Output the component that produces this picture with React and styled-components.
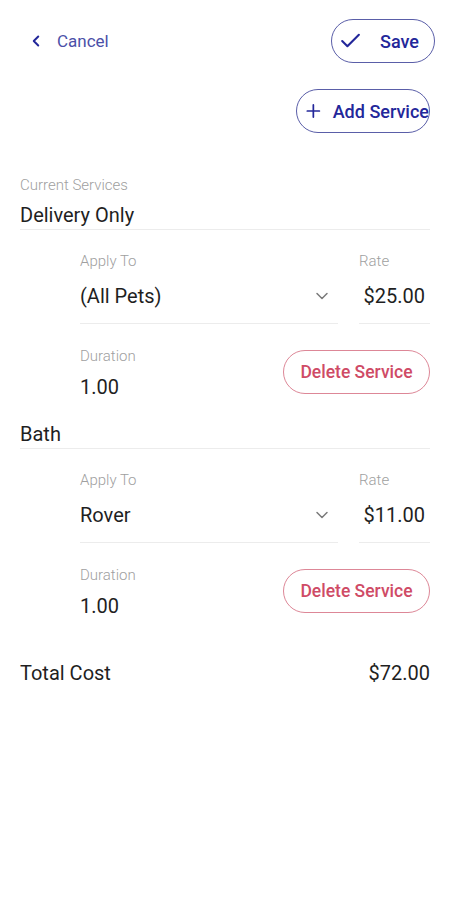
import styled, { createGlobalStyle } from 'styled-components'
import { Check, Plus, ChevronLeft, ChevronDown } from 'lucide-react'

const GlobalStyle = createGlobalStyle`
  body {
    margin: 0;
    background: #ffffff;
    font-family: Roboto, "Noto Sans", "Liberation Sans", sans-serif;
  }
`

const colors = {
  navy: '#23279a',
  navySoft: '#4b50a8',
  red: '#cf4b66',
  redBorder: '#dd8797',
  text: '#1f1f1f',
  label: '#a0a0a0',
  line: '#ececec',
}

const Page = styled.div`
  width: 450px;
  min-height: 900px;
  padding: 19px 20px 0;
  box-sizing: border-box;
`

const TopBar = styled.div`
  display: flex;
  justify-content: space-between;
  align-items: center;
  margin-right: -5px;
`

const CancelLink = styled.button`
  display: inline-flex;
  align-items: center;
  gap: 12px;
  padding: 0 0 0 7px;
  border: 0;
  background: none;
  color: ${colors.navySoft};
  font-family: inherit;
  font-size: 17px;

  svg {
    color: ${colors.navy};
  }
`

const PillButton = styled.button`
  display: inline-flex;
  align-items: center;
  box-sizing: border-box;
  height: 44px;
  border-radius: 22px;
  border: 1.5px solid ${(p) => (p.$danger ? colors.redBorder : '#5a5ea8')};
  background: #ffffff;
  color: ${(p) => (p.$danger ? colors.red : colors.navy)};
  font-family: inherit;
  font-size: 18px;
  font-weight: 500;
  white-space: nowrap;
`

const SaveButton = styled(PillButton)`
  width: 104px;
  padding: 0 15px 0 6px;
  gap: 17px;
`

const AddRow = styled.div`
  display: flex;
  justify-content: flex-end;
  margin-top: 26px;
`

const AddButton = styled(PillButton)`
  width: 134px;
  padding: 0 0 0 6px;
  gap: 9px;
  overflow: hidden;
`

const SectionLabel = styled.div`
  margin-top: 44px;
  font-size: 15px;
  font-weight: 300;
  line-height: 16px;
  color: ${colors.label};
`

const ServiceName = styled.div`
  margin-top: ${(p) => p.$top}px;
  padding-bottom: 3px;
  border-bottom: 1px solid ${colors.line};
  font-size: 20px;
  line-height: 22px;
  color: ${colors.text};
`

const Details = styled.div`
  padding-left: 60px;
  margin-top: 23px;
`

const FieldRow = styled.div`
  display: grid;
  grid-template-columns: 1fr 71px;
  gap: 21px;
`

const FieldLabel = styled.div`
  font-size: 15px;
  font-weight: 300;
  line-height: 16px;
  color: ${colors.label};
`

const FieldValue = styled.div`
  display: flex;
  align-items: center;
  justify-content: space-between;
  height: 54px;
  border-bottom: 1px solid ${colors.line};
  font-size: 20px;
  color: ${colors.text};

  svg {
    color: #7a7a7a;
    margin-right: 6px;
  }
`

const RateValue = styled(FieldValue)`
  justify-content: flex-end;
  padding-right: 5px;
`

const DurationRow = styled.div`
  display: flex;
  justify-content: space-between;
  align-items: flex-start;
  margin-top: 24px;
`

const DurationValue = styled(FieldValue)`
  height: 46px;
  border-bottom: 0;
`

const DeleteButton = styled(PillButton)`
  margin-top: 2px;
  width: 147px;
  justify-content: center;
  font-size: 17.5px;
`

const TotalRow = styled.div`
  display: flex;
  justify-content: space-between;
  margin-top: 33px;
  font-size: 20px;
  line-height: 22px;
  color: ${colors.text};
`

const services = [
  { name: 'Delivery Only', applyTo: '(All Pets)', rate: '$25.00', duration: '1.00', top: 11 },
  { name: 'Bath', applyTo: 'Rover', rate: '$11.00', duration: '1.00', top: 13 },
]

function ServiceBlock({ service }) {
  return (
    <>
      <ServiceName $top={service.top}>{service.name}</ServiceName>
      <Details>
        <FieldRow>
          <div>
            <FieldLabel>Apply To</FieldLabel>
            <FieldValue>
              {service.applyTo}
              <ChevronDown size={20} strokeWidth={1.8} />
            </FieldValue>
          </div>
          <div>
            <FieldLabel>Rate</FieldLabel>
            <RateValue>{service.rate}</RateValue>
          </div>
        </FieldRow>
        <DurationRow>
          <div>
            <FieldLabel>Duration</FieldLabel>
            <DurationValue>{service.duration}</DurationValue>
          </div>
          <DeleteButton $danger>Delete Service</DeleteButton>
        </DurationRow>
      </Details>
    </>
  )
}

export default function App() {
  return (
    <Page>
      <GlobalStyle />
      <TopBar>
        <CancelLink>
          <ChevronLeft size={18} strokeWidth={2.6} />
          Cancel
        </CancelLink>
        <SaveButton>
          <Check size={26} strokeWidth={2} />
          Save
        </SaveButton>
      </TopBar>
      <AddRow>
        <AddButton>
          <Plus size={22} strokeWidth={2} />
          Add Service
        </AddButton>
      </AddRow>
      <SectionLabel>Current Services</SectionLabel>
      {services.map((service) => (
        <ServiceBlock key={service.name} service={service} />
      ))}
      <TotalRow>
        <span>Total Cost</span>
        <span>$72.00</span>
      </TotalRow>
    </Page>
  )
}
